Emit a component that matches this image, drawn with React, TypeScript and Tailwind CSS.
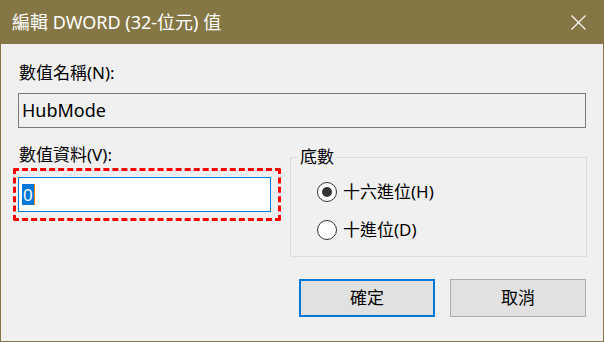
const font = { fontFamily: '"Noto Sans", "Noto Sans CJK TC", sans-serif' };

const Radio = ({ checked, label }: { checked?: boolean; label: string }) => (
  <div className="flex items-center h-[24px]">
    <span className="w-[20px] h-[20px] rounded-full border-[1.5px] border-[#333333] bg-white flex items-center justify-center">
      {checked && <span className="w-[10px] h-[10px] rounded-full bg-[#333333]" />}
    </span>
    <span className="ml-[6px] text-[17px] leading-[24px] text-black">{label}</span>
  </div>
);

export default function App() {
  return (
    <div
      className="w-[604px] h-[342px] flex flex-col border-x border-b border-[#857545] bg-[#f0f0f0] text-black"
      style={font}
    >
      <div className="h-[44px] bg-[#857646] flex items-center justify-between pl-[11px] pr-[17px] shrink-0">
        <span className="text-white text-[18px] leading-[24px]">編輯 DWORD (32-位元) 值</span>
        <svg width="15" height="15" viewBox="0 0 15 15" className="mt-[1px]">
          <path d="M0.5 0.5 L14.5 14.5 M14.5 0.5 L0.5 14.5" stroke="white" strokeWidth="1.1" fill="none" />
        </svg>
      </div>

      <div className="flex-1 flex flex-col pl-[17px] pr-[16px]">
        <div className="mt-[18px] ml-[1px] h-[22px] text-[17px] leading-[22px]">數值名稱(N):</div>
        <div className="mt-[9px] w-[568px] h-[35px] border border-[#7a7a7a] flex items-center pl-[3px] text-[18px]">
          HubMode
        </div>

        <div className="flex mt-[16px]">
          <div className="flex flex-col w-[268px] -ml-[5px]">
            <div className="ml-[6px] h-[22px] text-[17px] leading-[22px]">數值資料(V):</div>
            <div className="mt-[2px] w-[268px] h-[53px] border-[3px] border-dashed border-[#ff0000] rounded-[2px] pt-[6px] pl-[2px]">
              <div className="w-[253px] h-[35px] border border-[#0078d7] bg-white flex items-center pl-[3px]">
                <span className="bg-[#0078d7] text-white text-[17px] leading-[21px] px-[1px]">0</span>
                <span className="w-[1px] h-[21px] bg-[#f08000]" />
              </div>
            </div>
          </div>

          <fieldset className="ml-[9px] mt-[2px] w-[297px] h-[111px] border border-[#dcdcdc]">
            <legend className="ml-[7px] px-[2px] text-[17px] leading-[22px]">底數</legend>
            <div className="flex flex-col gap-[14px] mt-[12px] pl-[26px]">
              <Radio checked label="十六進位(H)" />
              <Radio label="十進位(D)" />
            </div>
          </fieldset>
        </div>

        <div className="flex justify-end gap-[15px] mt-[22px] mr-[1px]">
          <button className="w-[136px] h-[38px] border-2 border-[#0078d7] bg-[#e1e1e1] text-[17px]">確定</button>
          <button className="w-[136px] h-[38px] border border-[#adadad] bg-[#e1e1e1] text-[17px]">取消</button>
        </div>
      </div>
    </div>
  );
}
